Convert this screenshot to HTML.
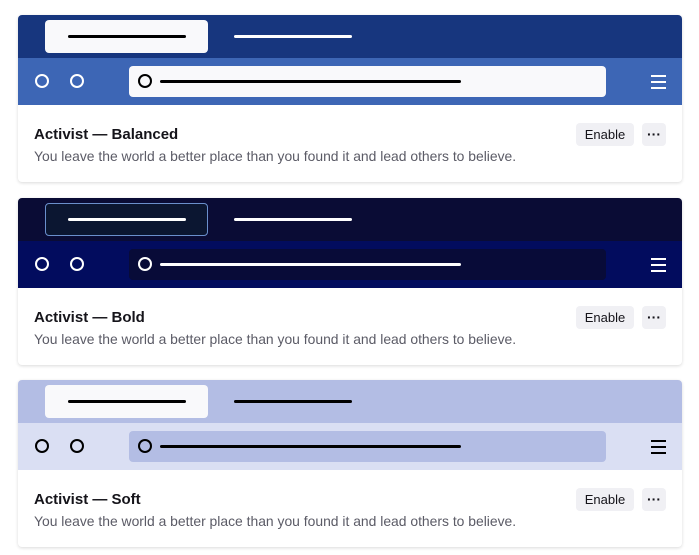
<!DOCTYPE html>
<html><head><style>
body{margin:0;background:#fff;width:699px;height:555px;position:relative;font-family:"Liberation Sans",sans-serif;overflow:hidden}
.card{position:absolute;left:18px;width:664px;height:167px;border-radius:4px;box-shadow:0 1px 3px rgba(0,0,0,.15);background:#fff;overflow:hidden}
.tabs{position:absolute;left:0;top:0;width:664px;height:43px}
.tb{position:absolute;left:0;top:43px;width:664px;height:47px}
.tab{position:absolute;left:27px;top:5px;width:163px;height:33px;border-radius:4px;box-sizing:border-box}
.ln{position:absolute;height:3px;border-radius:2px}
.c{position:absolute;width:10px;height:10px;border-radius:50%;border:2px solid;top:16px}
.url{position:absolute;left:111px;top:8px;width:477px;height:31px;border-radius:4px}
.ham{position:absolute;left:633px;top:17px;width:15px}
.ham i{display:block;height:2px;margin-bottom:4px}
.t{position:absolute;left:16px;top:111px;font-weight:bold;font-size:15px;color:#15141a}
.d{position:absolute;left:16px;top:133px;font-size:13.9px;color:#5b5b66}
.en{position:absolute;left:558px;top:108px;width:58px;height:23px;background:#f0f0f4;border-radius:4px;font-size:13px;color:#15141a;text-align:center;line-height:23px}
.mo{position:absolute;left:624px;top:108px;width:24px;height:23px;background:#f0f0f4;border-radius:4px;font-size:14px;text-align:center;line-height:23px;font-weight:bold;color:#15141a}
</style></head><body>

<div class="card" style="top:15px">
 <div class="tabs" style="background:#17367e"><div class="tab" style="background:#f9f9fb"><div class="ln" style="left:23px;top:15px;width:118px;background:#000"></div></div><div class="ln" style="left:216px;top:20px;width:118px;background:#fff"></div></div>
 <div class="tb" style="background:#3d66b5"><div class="c" style="left:17px;border-color:#fff"></div><div class="c" style="left:52px;border-color:#fff"></div>
 <div class="url" style="background:#f9f9fb"><div class="c" style="left:9px;top:8px;border-color:#000"></div><div class="ln" style="left:31px;top:14px;width:301px;background:#000"></div></div>
 <div class="ham"><i style="background:#fff"></i><i style="background:#fff"></i><i style="background:#fff"></i></div></div>
 <div class="t">Activist — Balanced</div><div class="d">You leave the world a better place than you found it and lead others to believe.</div>
 <div class="en">Enable</div><div class="mo">···</div>
</div>

<div class="card" style="top:198px">
 <div class="tabs" style="background:#0a0c35"><div class="tab" style="background:#0b1631;border:1px solid #6a8fcc"><div class="ln" style="left:22px;top:14px;width:118px;background:#fff"></div></div><div class="ln" style="left:216px;top:20px;width:118px;background:#fff"></div></div>
 <div class="tb" style="background:#020c5e"><div class="c" style="left:17px;border-color:#fff"></div><div class="c" style="left:52px;border-color:#fff"></div>
 <div class="url" style="background:#080b38"><div class="c" style="left:9px;top:8px;border-color:#fff"></div><div class="ln" style="left:31px;top:14px;width:301px;background:#fff"></div></div>
 <div class="ham"><i style="background:#fff"></i><i style="background:#fff"></i><i style="background:#fff"></i></div></div>
 <div class="t">Activist — Bold</div><div class="d">You leave the world a better place than you found it and lead others to believe.</div>
 <div class="en">Enable</div><div class="mo">···</div>
</div>

<div class="card" style="top:380px">
 <div class="tabs" style="background:#b3bde4"><div class="tab" style="background:#f9f9fb"><div class="ln" style="left:23px;top:15px;width:118px;background:#000"></div></div><div class="ln" style="left:216px;top:20px;width:118px;background:#000"></div></div>
 <div class="tb" style="background:#dadff3"><div class="c" style="left:17px;border-color:#000"></div><div class="c" style="left:52px;border-color:#000"></div>
 <div class="url" style="background:#b3bde4"><div class="c" style="left:9px;top:8px;border-color:#000"></div><div class="ln" style="left:31px;top:14px;width:301px;background:#000"></div></div>
 <div class="ham"><i style="background:#000"></i><i style="background:#000"></i><i style="background:#000"></i></div></div>
 <div class="t">Activist — Soft</div><div class="d">You leave the world a better place than you found it and lead others to believe.</div>
 <div class="en">Enable</div><div class="mo">···</div>
</div>

</body></html>
